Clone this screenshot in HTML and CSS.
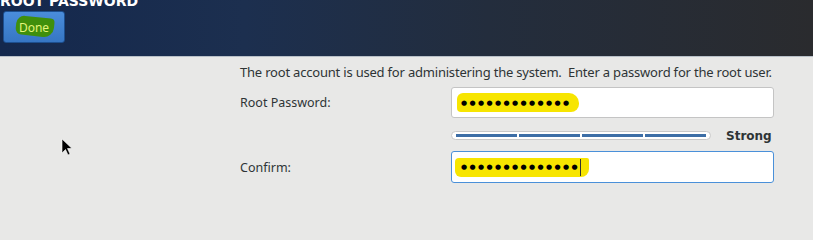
FILE: index.html
```html
<!DOCTYPE html>
<html>
<head>
<meta charset="utf-8">
<link rel="stylesheet" href="styles.css">
</head>
<body>
<header class="top">
  <div class="title">ROOT PASSWORD</div>
  <button class="done"><span class="hl-green"></span><span class="done-txt">Done</span></button>
</header>
<main class="content">
  <p class="desc">The root account is used for administering the system.&nbsp; Enter a password for the root user.</p>
  <div class="form">
    <label class="lbl">Root Password:</label>
    <div class="field">
      <span class="hl hl1"></span>
      <span class="dots">&#9679;&#9679;&#9679;&#9679;&#9679;&#9679;&#9679;&#9679;&#9679;&#9679;&#9679;&#9679;&#9679;</span>
    </div>
    <div class="spacer"></div>
    <div class="strength">
      <div class="meter"><i></i><i></i><i></i><i></i></div>
      <span class="strong">Strong</span>
    </div>
    <label class="lbl">Confirm:</label>
    <div class="field focus">
      <span class="hl hl2"></span>
      <span class="dots">&#9679;&#9679;&#9679;&#9679;&#9679;&#9679;&#9679;&#9679;&#9679;&#9679;&#9679;&#9679;&#9679;&#9679;</span><span class="caret"></span>
    </div>
  </div>
</main>
<svg class="pointer" width="12" height="19" viewBox="0 0 12 19"><path d="M1 1 L1 15 L4.5 11.5 L7 17 L9 16 L6.5 10.5 L11 10.5 Z" fill="#000" stroke="#fff" stroke-width="0.6"/></svg>
</body>
</html>
```
FILE: styles.css
```css
html, body { margin: 0; padding: 0; }
body {
  width: 813px; height: 240px; overflow: hidden;
  background: #e8e8e7;
  font-family: "Noto Sans", "DejaVu Sans", sans-serif;
  color: #2e3436;
  position: relative;
}
.top {
  height: 57px;
  background: linear-gradient(90deg, #14284d 0%, #1c2f4f 30%, #232d3d 60%, #2a2b2e 100%);
  border-bottom: 1px solid #b8c0c8;
  position: relative;
  padding-top: 1px;
  box-sizing: border-box;
}
.title {
  color: #fff; font-weight: bold; font-size: 14px;
  line-height: 14px; margin-top: -7px; margin-left: 0;
  letter-spacing: 0;
  font-family: "DejaVu Sans", sans-serif;
}
.done {
  margin: 3px 0 0 3px;
  width: 62px; height: 32px;
  border: 1px solid #1d4f8f;
  border-radius: 3px;
  background: linear-gradient(#4a8ddb, #3676c4);
  position: relative;
  padding: 0;
  font-family: "Noto Sans", sans-serif;
  font-size: 12px;
}
.hl-green {
  position: absolute; left: 12px; top: 5px; width: 38px; height: 19px;
  background: #3f8f0c; border-radius: 8px 4px 10px 6px;
  transform: rotate(6deg);
}
.done-txt { position: relative; color: #e4f57a; }
.content { padding: 7px 0 0 240px; }
.desc { margin: 0; font-size: 13px; line-height: 16px; letter-spacing: -0.2px; }
.form {
  display: grid;
  grid-template-columns: 211px 323px;
  grid-template-rows: 31px 11px 12px 10px 32px;
  margin-top: 7px;
  align-items: center;
}
.lbl { font-size: 12.5px; }
.field {
  height: 31px; box-sizing: border-box;
  background: #fff; border: 1px solid #c4c4c4; border-radius: 3px;
  display: flex; align-items: center; padding-left: 9px;
  position: relative;
}
.field.focus { height: 32px; border-color: #4a90d9; }
.dots { position: relative; font-size: 7px; letter-spacing: 2.4px; color: #000; font-family: "DejaVu Sans", sans-serif; }
.hl { position: absolute; background: #f7e500; }
.hl1 { left: 5px; top: 5px; width: 122px; height: 19px; border-radius: 6px 10px 8px 4px; }
.hl2 { left: 3px; top: 6px; width: 134px; height: 19px; border-radius: 4px 2px 8px 6px; }
.caret { width: 1px; height: 17px; background: #333; position: relative; margin-left: 0; }
.spacer { grid-row: 3; grid-column: 1; }
.strength { grid-row: 3; grid-column: 2; display: flex; align-items: center; }
.meter {
  width: 260px; height: 9px; box-sizing: border-box;
  border: 1px solid #c8c8c8; border-radius: 5px; background: #fff;
  display: flex; gap: 2px; padding: 2px 4px;
}
.meter i { flex: 1; background: #3d6ea6; }
.strong { font-weight: bold; font-size: 12px; margin-left: 15px; margin-top: 1px; color: #2e3436; font-family: "DejaVu Sans", sans-serif; }
.form > .lbl:nth-of-type(2) { grid-row: 5; }
.form > .field.focus { grid-row: 5; grid-column: 2; }
.pointer { position: absolute; left: 61px; top: 138px; }
```
